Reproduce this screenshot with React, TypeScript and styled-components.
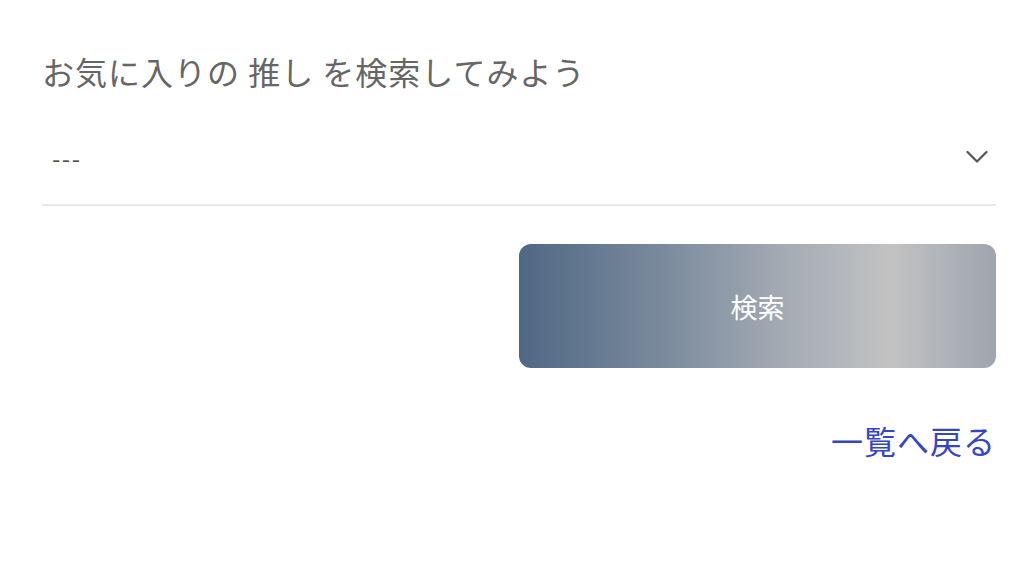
import styled, { createGlobalStyle } from 'styled-components'

const GlobalStyle = createGlobalStyle`
  html, body {
    margin: 0;
    padding: 0;
    background: #ffffff;
  }
  body {
    font-family: "Noto Sans CJK JP", "Noto Sans", sans-serif;
  }
`

const Page = styled.main`
  padding: 47px 28px 0 42px;
  width: 954px;
  display: flex;
  flex-direction: column;
`

const Heading = styled.h1`
  margin: 0;
  font-size: 32px;
  font-weight: 400;
  line-height: 48px;
  color: #666666;
  letter-spacing: 1px;
`

const SelectRow = styled.div`
  margin-top: 15px;
  height: 96px;
  box-sizing: border-box;
  border-bottom: 2px solid #e8e8e8;
  display: flex;
  align-items: center;
  justify-content: space-between;
  padding: 0 8px 0 10px;
  cursor: pointer;
`

const Placeholder = styled.span`
  font-size: 24px;
  color: #555555;
  letter-spacing: 1.5px;
`

const Actions = styled.div`
  margin-top: 38px;
  display: flex;
  justify-content: flex-end;
`

const SearchButton = styled.button`
  width: 477px;
  height: 124px;
  border: none;
  border-radius: 12px;
  background: linear-gradient(90deg, #4f6884 0%, #7a8a9c 30%, #a3aab3 55%, #c2c2c2 78%, #9ea5ae 100%);
  color: #ffffff;
  font-family: inherit;
  font-size: 27px;
  cursor: pointer;
`

const BackLink = styled.a`
  margin-top: 48px;
  align-self: flex-end;
  font-size: 32px;
  line-height: 48px;
  color: #3546c4;
  letter-spacing: 1px;
  text-decoration: none;
`

function Chevron() {
  return (
    <svg width="22" height="14" viewBox="0 0 22 14" fill="none">
      <path d="M1.5 2 L11 11.5 L20.5 2" stroke="#555" strokeWidth="2.2" strokeLinecap="round" strokeLinejoin="round" />
    </svg>
  )
}

export default function App() {
  return (
    <>
      <GlobalStyle />
      <Page>
        <Heading>お気に入りの 推し を検索してみよう</Heading>
        <SelectRow>
          <Placeholder>---</Placeholder>
          <Chevron />
        </SelectRow>
        <Actions>
          <SearchButton>検索</SearchButton>
        </Actions>
        <BackLink href="#">一覧へ戻る</BackLink>
      </Page>
    </>
  )
}
